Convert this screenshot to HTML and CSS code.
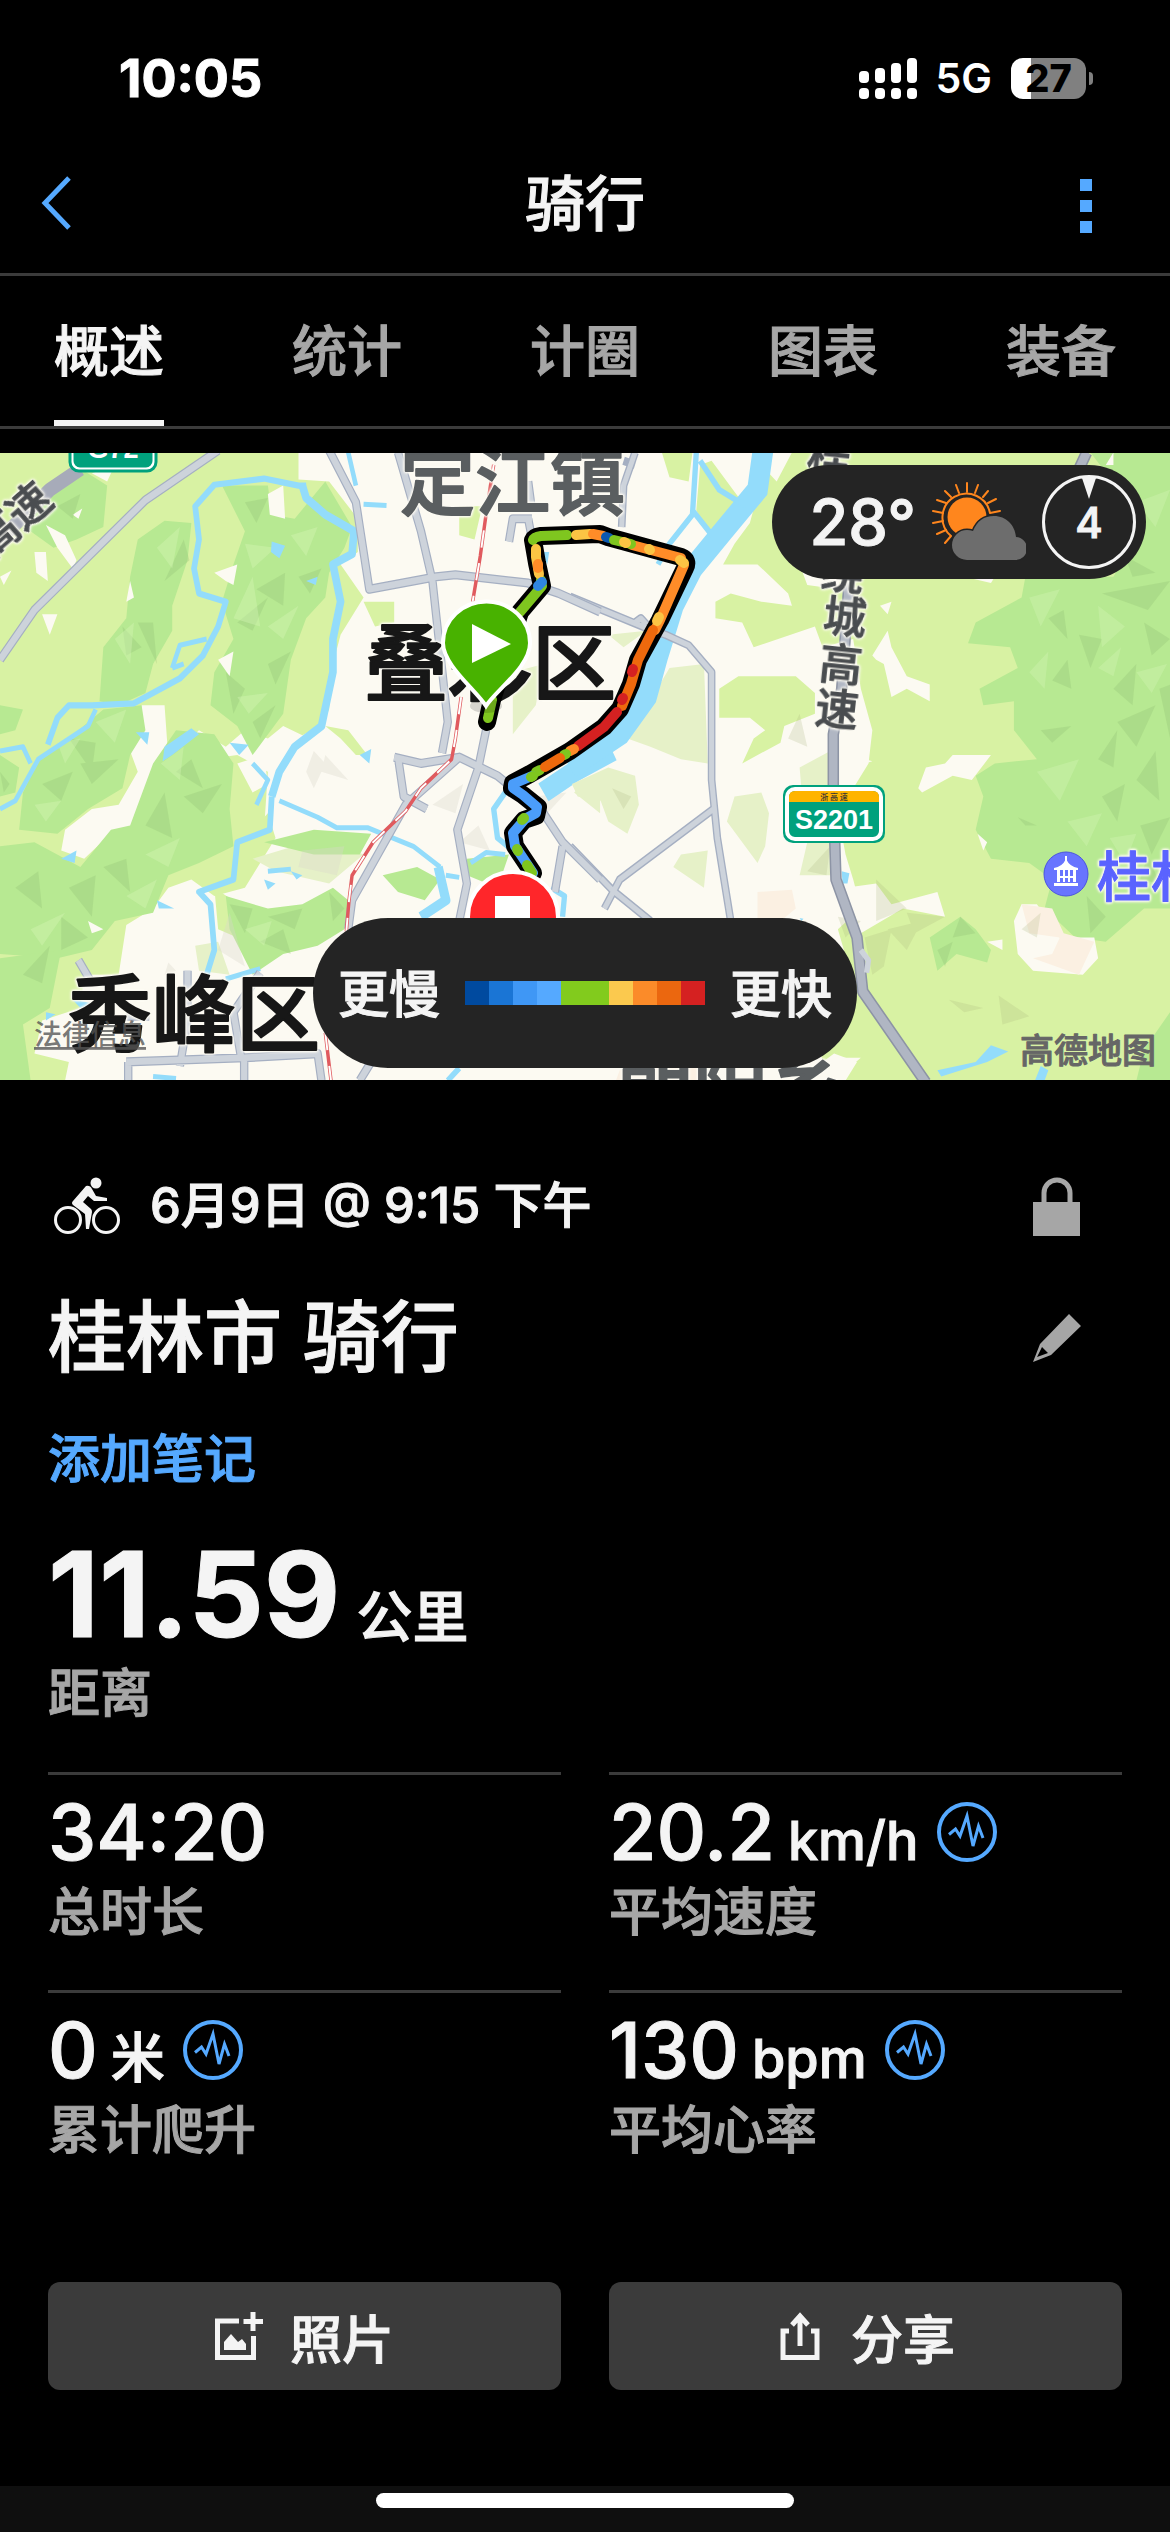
FILE: index.html
```html
<!DOCTYPE html>
<html lang="zh-CN">
<head>
<meta charset="utf-8">
<meta name="viewport" content="width=device-width">
<title>骑行</title>
<link rel="stylesheet" href="styles.css">
</head>
<body>
<svg width="0" height="0" class="defs" aria-hidden="true">
  <symbol id="pulse" viewBox="0 0 60 60">
    <circle cx="30" cy="30" r="28" fill="none" stroke="#55a9ff" stroke-width="4"/>
    <path d="M12 32.500 18.500 27 23 34 30 14 36 44 41.500 24 46 36" fill="none" stroke="#55a9ff" stroke-width="3" stroke-linejoin="miter"/>
  </symbol>
</svg>
<div class="screen">
  <div class="status">
    <span class="clock">10:05</span>
    <div class="status-right">
      <svg class="signal" viewBox="0 0 58 41" fill="#fff">
        <rect x="0" y="13" width="10" height="12" rx="4"/><rect x="16" y="10" width="10" height="15" rx="4"/><rect x="32" y="5" width="10" height="20" rx="4"/><rect x="48" y="0" width="10" height="25" rx="4"/>
        <rect x="0" y="30" width="10" height="11" rx="4"/><rect x="16" y="30" width="10" height="11" rx="4"/><rect x="32" y="30" width="10" height="11" rx="4"/><rect x="48" y="30" width="10" height="11" rx="4"/>
      </svg>
      <span class="network">5G</span>
      <div class="battery"><span class="level">27</span><span class="cap"></span></div>
    </div>
  </div>

  <header class="header">
    <button class="icon-button" aria-label="返回"><svg width="32" height="54" viewBox="0 0 32 54"><path d="M29 2 5 27 29 52" fill="none" stroke="#55a9ff" stroke-width="5"/></svg></button>
    <h1>骑行</h1>
    <button class="icon-button more" aria-label="更多"><svg width="12" height="54" viewBox="0 0 12 54"><path d="M0 0h12v12H0zM0 21h12v12H0zM0 42h12v12H0z" fill="#55a9ff"/></svg></button>
  </header>

  <nav class="tabs">
    <a href="#overview" class="active">概述</a>
    <a href="#stats">统计</a>
    <a href="#laps">计圈</a>
    <a href="#charts">图表</a>
    <a href="#gear">装备</a>
  </nav>

  <section class="map">
    <svg class="map-art" viewBox="0 453 1170 627">
      <rect y="453" width="1170" height="627" fill="#fcfaf2"/>
      <!-- west side: vegetation, relief and water -->
      <g transform="translate(0 440) scale(.3827 .4146)">
        <path fill="#d8f2a3" d="M0 30H780V95L860 100 935 190 935 270 890 300 950 380 890 470 870 540 860 650 840 690 790 712 740 690 700 720 640 700 590 740 520 700 440 770 430 640 370 640 340 750 360 800 310 880 240 890 170 940 160 990 220 1010 300 940 440 1000 560 960 640 960 700 900 720 960 640 1080 560 1100 500 1060 440 1080 400 1130 330 1170 310 1290 220 1290 210 1370 110 1400 90 1480 180 1500 170 1545H0Z"/>
        <path fill="#d8f2a3" d="M850 690 910 700 960 760 930 760 890 720ZM950 390H1030V440L980 450ZM1200 160H1260L1240 240 1200 230ZM560 1080 640 1130 620 1200 570 1180ZM540 770 620 760 700 800 690 940 600 1000 520 980Z"/>
        <path fill="#e6f1c8" d="M1340 560 1420 540 1400 640 1340 710ZM510 1220 570 1210 600 1290 520 1280ZM660 1010 840 960 950 1000 860 1070 720 1040ZM1500 850 1568 800V900Z"/>
        <g fill="#b7e992">
          <path d="M140 100 220 75 280 110 270 210 200 240 140 260 110 240 50 200 90 150ZM360 240 430 195 500 200 490 290 450 400 450 460 400 540 380 610 310 640 260 630 270 500 330 430 340 330Z"/>
          <path d="M580 110 700 110 710 180 770 190 850 100 920 210 900 260 860 320 850 380 800 430 760 530 740 660 660 760 620 690 550 640 560 560 610 480 580 390 610 300 640 220Z"/>
          <path d="M100 770 180 720 270 650 370 640 380 700 340 760 320 840 230 890 150 950 50 940 60 850Z"/>
          <path d="M400 780 460 700 560 710 610 780 600 890 610 980 520 1020 440 1050 400 1140 300 1160 240 1230 150 1250 0 1240V980L90 970 210 1030 290 940 340 930Z"/>
          <path d="M0 1250 160 1230 130 1370 60 1410 80 1545H0ZM590 1100 700 1130 790 1120 870 1080 910 1110 900 1180 830 1220 740 1240 660 1290 600 1180ZM690 970 820 940 970 950 940 1000 820 1000ZM1000 1050 1090 1030 1150 1060 1110 1110 1040 1090ZM0 640 60 650 40 700 0 710ZM0 760 50 790 40 850 0 860ZM1220 1010 1330 1000 1300 1080 1220 1050Z"/>
        </g>
        <g fill="#fcfaf2">
          <path d="M120 205 170 230 200 290 190 310 150 260ZM90 270 120 270 125 340 95 320ZM110 420 150 420 130 470ZM340 340 350 380 330 390ZM700 130 740 110 745 190 705 180ZM560 320 620 300 610 350 590 340ZM570 530 610 510 600 570ZM240 80 300 60 280 100ZM190 180 215 165 205 190ZM0 330 30 315 10 350ZM620 780 690 760 700 830 660 850ZM230 1160 270 1180 240 1190Z"/>
        </g>
        <g fill="#91bf73" opacity=".3">
          <path d="M360 440 410 540 400 440ZM670 360 745 320 740 400ZM480 240 495 290 430 340ZM320 450 370 500 330 520ZM620 440 700 380 660 460ZM700 540 760 510 720 590ZM590 560 640 600 610 660ZM660 680 720 640 680 720ZM180 720 250 730 240 800ZM210 780 310 770 240 830ZM110 830 190 800 160 870ZM330 1010 340 1090 270 1030ZM500 770 530 840 460 800ZM380 930 430 850 450 960ZM40 1080 100 1040 110 1130ZM180 1080 250 1050 240 1150ZM60 1290 130 1220 110 1310ZM600 1120 660 1130 640 1190ZM680 1210 740 1180 760 1240ZM700 1150 790 1130 770 1180ZM860 1090 900 1130 870 1160ZM160 1150 230 1200 160 1230ZM0 800 25 830 10 850ZM150 160 210 130 190 190ZM640 150 700 140 670 200ZM780 330 840 310 810 370ZM480 860 580 830 530 900Z"/>
        </g>
        <g fill="#d5f5b4" opacity=".4">
          <path d="M410 260 470 210 450 310ZM610 430 660 330 680 450ZM640 250 720 260 660 310ZM700 450 780 400 740 480ZM150 730 210 720 170 780ZM250 680 330 650 300 730ZM90 880 160 870 120 920ZM420 780 480 740 470 820ZM330 1100 410 1060 380 1130ZM80 1180 170 1140 110 1220ZM640 1180 710 1160 690 1220ZM300 480 350 440 340 540ZM620 620 700 610 650 660ZM380 1000 470 960 440 1030ZM760 230 830 210 800 280Z"/>
        </g>
        <g fill="#d9d6cb" opacity=".35"><path d="M820 750 850 780 820 840 800 800ZM850 760 910 820 840 800ZM1130 880 1210 830 1190 900ZM1200 970 1250 930 1280 990ZM440 1260 460 1280 430 1290ZM790 990 900 980 880 1050 780 1030ZM1400 860 1480 850 1430 900ZM600 1140 570 1230 640 1270Z"/></g>
        <g fill="none" stroke="#93dcfb" stroke-width="12" stroke-linejoin="round">
          <path d="M480 540 450 550M540 480 470 495 450 550M250 650 230 690 100 770 40 870 0 890M0 750 60 740 80 780" />
          <path stroke-width="15" d="M800 110 780 110 690 93 560 108 510 160 520 240 507 310 520 370 590 390 570 450 530 520 470 575 350 635 240 640 180 640 150 670 125 735"/>
          <path stroke-width="20" d="M790 110 800 140 850 180 925 220 920 275 870 300 890 390 870 480 870 560 840 690 770 740 730 800 710 860"/>
          <path stroke-width="15" d="M710 860 705 940 620 970 610 1060 520 1090 550 1120 560 1230 540 1290"/>
          <path d="M910 30 930 110M660 780 700 820 670 880M730 870 830 910 880 935 960 935 1080 980 1150 1030"/>
          <path stroke-width="24" d="M1145 1030 1165 1110 1100 1150"/>
          <path d="M1165 1050 1200 1055M1230 1020 1270 995 1320 1000M950 155 1010 158M700 1040 760 1035M590 1300 680 1275M400 1535 460 1540"/>
          <path stroke-width="14" d="M1320 850 1290 890 1300 960 1340 990M1440 1080 1475 1100 1470 1150M1170 1545 1200 1515"/>
        </g>
        <path fill="#93dcfb" d="M710 245 745 255 730 285 708 270ZM430 740 500 695 520 710 450 760 425 775ZM355 705 390 705 385 735ZM160 1010 200 990 195 1020ZM940 760 970 745 965 780ZM690 1060 720 1070 700 1085ZM760 1040 790 1050 775 1060ZM410 1110 455 1130 415 1130ZM600 730 650 735 625 760ZM800 340 830 330 825 350ZM120 1380 145 1385 120 1400ZM1415 270 1435 270 1430 300ZM190 1350 250 1360 210 1370Z"/>
        <path fill="none" stroke="#93dcfb" stroke-width="50" d="M1600 750 1500 800 1420 850"/>
      </g>
      <!-- east side -->
      <g transform="translate(570 440) scale(.3827 .4146)">
        <path fill="#d8f2a3" d="M240 30H320L310 100 260 90ZM340 60 370 50 450 150 370 240 330 170ZM520 30H1568V1545H720L750 1500 690 1480 660 1500 640 1400 750 1340 700 1180 760 1130 740 1060 720 1000 700 900 780 780 790 700 760 600 740 480 660 500 640 450 480 500 450 440 380 430 380 390 420 370 500 390 580 400 570 370 490 300 400 300 430 250 470 200ZM390 600 440 570 590 570 640 610 640 660 560 690 550 730 450 780 480 720 510 700 470 670 390 670Z"/>
        <path fill="#b7e992" d="M1360 30H1568V1130L1500 1130 1400 1210 1320 1200 1240 1130 1260 1060 1200 1020 1100 1010 1060 940 1080 860 1060 810 1110 780 1220 770 1160 700 1160 630 1080 640 1070 600 1170 550 1150 500 1040 490 1060 440 1180 380 1190 330H1420L1500 200ZM940 1200 1020 1150 1060 1180 1100 1230 1090 1260 1010 1240 960 1280ZM1500 1470 1568 1380V1545H1480Z"/>
        <path fill="#fcfaf2" d="M640 160 720 290 700 360 620 350 600 300ZM530 30 580 30 540 100 520 80ZM790 520 830 460 840 500 880 570 940 590 940 630 880 600 840 620 820 540 800 530ZM1030 330H1110L1100 345ZM700 750 790 775 700 800ZM910 840 930 790 980 780 1000 760 1100 760 1050 820 1000 810 920 850ZM1065 950 1090 970 1080 990ZM720 1080 800 1070 840 1120 960 1090 980 1150 870 1130 760 1190ZM1090 1210 1130 1205 1130 1230ZM1160 1160 1180 1120 1220 1120 1280 1200 1370 1200 1380 1250 1340 1290 1210 1280 1170 1240ZM1400 60 1420 30 1420 60ZM680 1490 760 1490 710 1530ZM810 400 840 390 830 420Z"/>
        <path fill="#e6f1c8" d="M260 550 350 540 360 780 290 770 210 740 150 720ZM5 830 100 790 170 810 180 880 150 950 100 920 80 870 20 860ZM430 860 500 850 520 900 510 980 490 1020 410 920ZM290 1000 360 990 350 1080 270 1030ZM600 790 680 750 690 920 610 900ZM100 470 200 460 140 500ZM620 970 690 970 680 1050 600 1050Z"/>
        <path fill="#fbf0e2" d="M490 1090 580 1085 590 1130 560 1153H490ZM1180 1120 1260 1130 1290 1190 1370 1210 1330 1290 1210 1250 1260 1240 1280 1200 1200 1190ZM130 1520 350 1510 340 1545H120Z"/>
        <g fill="#91bf73" opacity=".3">
          <path d="M1390 370 1568 340 1510 410ZM1330 470 1390 480 1360 550ZM1250 430 1290 410 1300 480ZM1420 600 1480 540 1470 640ZM1430 680 1530 640 1480 740ZM1480 820 1530 750 1540 870ZM1230 700 1310 690 1260 730ZM1170 910 1220 930 1190 930ZM1500 440 1568 480 1520 520ZM1450 280 1530 320 1470 330ZM1390 860 1450 830 1430 920ZM1260 580 1300 530 1310 600ZM1540 600 1568 590V720ZM1490 930 1568 910 1520 1000ZM1020 1150 1060 1190 1000 1200ZM960 1230 1000 1210 980 1270ZM1510 1000 1540 1070 1490 1060ZM1350 1100 1400 1150 1360 1190ZM1380 770 1430 700 1420 790Z"/>
        </g>
        <g fill="#d5f5b4" opacity=".35"><path d="M1200 380 1280 360 1230 450ZM1380 400 1450 450 1390 500ZM1480 150 1568 120 1530 210ZM1220 800 1330 770 1280 870ZM1300 920 1390 900 1350 980ZM1480 560 1560 540 1520 610ZM1200 560 1250 510 1240 600ZM1410 960 1480 950 1450 1020ZM1380 550 1440 500 1420 570Z"/></g>
        <g fill="#a9b37d" opacity=".22"><path d="M620 1040 680 980 670 1050ZM800 1060 880 1130 800 1160ZM880 1140 980 1150 900 1190ZM700 1150 760 1160 720 1200ZM770 1200 840 1180 820 1270 790 1290ZM990 1350 1080 1370 1030 1380ZM1120 1340 1200 1390 1130 1410ZM570 720 600 660 620 740ZM110 840 160 860 140 890ZM1180 1180 1230 1140 1220 1200ZM830 1180 920 1160 880 1230Z"/></g>
        <path fill="none" stroke="#93dcfb" stroke-width="54" d="M505 20 490 120 400 220 320 310 270 400 230 520 200 620 130 710 0 790"/>
        <path fill="none" stroke="#93dcfb" stroke-width="14" d="M330 30 320 180 260 250 230 300M340 50 390 120 460 160M320 170 380 240"/>
        <path fill="#93dcfb" d="M710 1040 730 1045 725 1070 712 1070ZM960 1520 1060 1500 1100 1460 1145 1475 1090 1500 970 1535ZM1215 1545 1230 1510 1250 1520 1240 1545ZM600 1153 610 1155 605 1160Z"/>
        <g fill="none" stroke-linejoin="round">
          <g stroke="#a5afc2" stroke-width="20"><path d="M0 378 190 450 250 470 310 495 370 560V820L385 960 420 1160M375 890 130 1060 90 1130M0 980 110 1085 210 1160M170 30 140 110 135 210M140 50 170 60M170 440 185 430 200 445"/></g>
          <g stroke="#cdd3db" stroke-width="13"><path d="M0 378 190 450 250 470 310 495 370 560V820L385 960 420 1160M375 890 130 1060 90 1130M0 980 110 1085 210 1160M170 30 140 110 135 210M170 440 185 430 200 445"/></g>
          <path stroke="#8d94a5" stroke-width="30" d="M730 330 710 600 688 710V860L695 1060 750 1200 765 1330 930 1550M1350 30 1320 90"/>
          <path stroke="#b0b6c3" stroke-width="22" d="M730 330 710 600 688 710V860L695 1060 750 1200 765 1330 930 1550M1350 30 1320 90"/>
          <path stroke="#cdd3db" stroke-width="14" d="M760 1230 780 1255 775 1285"/>
        </g>
      </g>
      <!-- western road network and railway -->
      <g transform="translate(0 440) scale(.3827 .4146)" fill="none" stroke-linejoin="round">
        <g stroke="#a5afc2" stroke-width="22"><path d="M0 530 90 410 380 145 570 25M860 25 930 150 965 360 1140 330 1190 325 1380 345 1460 370 1568 415M1040 30 1100 220 1130 340 1170 680 1155 755M1030 765 1100 780 1200 765 1300 810 1420 900 1470 970 1568 1060M1040 765 1055 860 1115 890M1270 700 1250 790 1195 940 1220 1070 1200 1160M1470 980 1450 1090M205 1255 240 1310M330 1500 640 1490 830 1480 840 1545M335 1500V1545M638 1490V1545M470 1510 490 1400 490 1280M630 1490 610 1380 680 1285M1390 190H1340L1330 245M1380 190 1395 260M940 1545 970 1500M910 1180 920 1110 1060 880 1200 765M390 1390H330M1380 100 1390 170"/></g>
        <g stroke="#cdd3db" stroke-width="16"><path d="M0 530 90 410 380 145 570 25M860 25 930 150 965 360 1140 330 1190 325 1380 345 1460 370 1568 415M1040 30 1100 220 1130 340 1170 680 1155 755M1030 765 1100 780 1200 765 1300 810 1420 900 1470 970 1568 1060M1040 765 1055 860 1115 890M1270 700 1250 790 1195 940 1220 1070 1200 1160M1470 980 1450 1090M205 1255 240 1310M330 1500 640 1490 830 1480 840 1545M335 1500V1545M638 1490V1545M470 1510 490 1400 490 1280M630 1490 610 1380 680 1285M1390 190H1340L1330 245M1380 190 1395 260M940 1545 970 1500M910 1180 920 1110 1060 880 1200 765M390 1390H330M1380 100 1390 170"/></g>
        <path stroke="#a7abb9" stroke-width="34" d="M0 240 130 120 210 70"/>
        <path stroke="#e05a5e" stroke-width="9" d="M1290 60 1270 180 1255 280 1235 390M1205 620 1190 720 1180 770 1100 840 1060 895 975 970 920 1050 912 1110 905 1185M850 1430 865 1545"/>
        <path stroke="#fff" stroke-width="5" stroke-dasharray="42 38" d="M1290 60 1270 180 1255 280 1235 390M1205 620 1190 720 1180 770 1100 840 1060 895 975 970 920 1050 912 1110 905 1185M850 1430 865 1545"/>
      </g>
      <!-- highway shields -->
      <rect x="72" y="430" width="82" height="39" rx="8" fill="#00a17d" stroke="#fff" stroke-width="3"/><rect x="70" y="430" width="86" height="41" rx="9" fill="none" stroke="#00a17d" stroke-width="3"/>
      <text class="shield" x="113" y="458">G72</text>
      <rect x="783" y="785" width="102" height="58" rx="10" fill="#00a17d"/><rect x="787" y="789" width="94" height="50" rx="8" fill="#00a17d" stroke="#fff" stroke-width="4"/><path d="M789 802v-5q0-6 6-6h78q6 0 6 6v5z" fill="#ffb400"/>
      <text class="shield-top" x="834" y="800">浙 高 速</text>
      <text class="shield" x="834" y="829">S2201</text>
      <!-- place names -->
      <g class="town"><text x="400" y="509">定江镇</text><text x="618" y="1113">朝阳乡</text></g>
      <g class="district"><text x="364" y="694">叠彩区</text><text x="68" y="1045">秀峰区</text></g>
      <g class="road"><text transform="translate(9 544) rotate(-41)" x="-24" y="0">高速</text>
        <text transform="translate(829 458) rotate(6)" y="16">桂</text><text transform="translate(843 573) rotate(6)" y="16">绕</text><text transform="translate(845 617) rotate(6)" y="16">城</text><text transform="translate(841 664) rotate(6)" y="16">高</text><text transform="translate(837 709) rotate(6)" y="16">速</text></g>
      <circle cx="1066" cy="874" r="22" fill="#6874ff" stroke="#4a53e0"/><path d="M1054 868q8-1 12-9 4 8 12 9v2h-24zM1057 870h3v12h-3zM1063 870h2v12h-2zM1068 870h2v12h-2zM1073 870h3v12h-3zM1057 876h19v2h-19zM1054 883h24v3h-24zM1065 856h2v5h-2z" fill="#fff"/>
      <text class="poi" x="1097" y="897">桂林</text>
      <!-- ridden track, coloured by speed -->
      <g fill="none" stroke-linecap="round" stroke-linejoin="round">
        <path stroke="#000" stroke-width="18" d="M487 722 492 700 520 612 542 586 537 563 533 540Q534 537 541 536L600 534 608 537 681 557Q689 560 685 568L660 620 638 660 631 684 620 709 604 727 570 751 530 774 513 783 512 788 523 795 538 807 536 816 524 820 513 833 515 846 533 873"/>
        <g stroke-width="10" stroke="#7fc61f">
          <path d="M488 718 492 700M520 612 542 586 541 580M533 540Q534 537 541 536L567 535"/>
          <path stroke="#fbc444" d="M539 574 536 557 536 549M576 535 590 534"/><path stroke="#ff8c28" d="M538 564V568M593 534 603 536M632 545 681 558M684 565 660 620 655 630"/>
          <path stroke="#2f86e0" d="M538 586 542 582"/>
          <path stroke="#0c58b0" d="M606 537 609 538"/><path d="M614 540 631 544"/>
          <path stroke="#fbc444" d="M624 542 626 543M649 549 650 550M680 560 684 563M657 621 659 617"/>
          <path stroke="#ee690d" d="M653 630 638 660 631 684 622 706"/>
          <path stroke="#d42121" d="M633 669 632 672M623 698 622 700M617 712 604 727 578 746"/>
          <path stroke="#ff8c28" d="M574 749 570 751"/><path d="M566 754 564 755M540 770 536 772"/><path stroke="#ee690d" d="M560 758 545 767"/>
          <path stroke="#4b9dfa" d="M532 776 513 784 513 788 523 795 537 807 536 813 525 819 513 833 515 846 533 873"/>
          <path d="M531 777 533 776M524 818 522 820M517 849 518 851M527 865 532 873"/>
        </g>
      </g>
      <ellipse cx="486" cy="706" rx="16" ry="7" opacity=".15"/>
      <path d="M486 706C476 690 443 665 443 643A43 41 0 0 1 530 643C530 667 496 690 486 706Z" fill="#48b200" stroke="#fff" stroke-width="4"/><path d="M472 624v39l39-19z" fill="#fff"/>
      <circle cx="513" cy="917" r="45" fill="#ff262a" stroke="#fff" stroke-width="4"/><path d="M495 896h35v35h-35z" fill="#fff"/>
      <text class="credit" x="1020" y="1063">高德地图</text>
      <a href="#legal"><text class="legal" x="34" y="1045">法律信息</text></a>
    </svg>

    <div class="weather">
      <span>28°</span>
      <svg width="94" height="80" viewBox="0 0 94 80">
        <g fill="none" stroke="#ff861d" stroke-width="2"><path d="M19 54A24 24 0 1 1 58 31"/><path stroke-linecap="round" d="M35 10V1M43 11 46 3M51 15 56 9M56 21 64 17M58 31 68 29M27 11 24 3M19 15 13 9M14 21 5 18M11 31 1 29M11 39 1 41M14 48 5 52M19 54 13 61"/></g>
        <circle cx="35" cy="35" r="19.500" fill="#ff861d"/>
        <path d="M35 78a15 15 0 0 1 0-30q3 0 6 1C45 39 52 34 62 34c12 0 21 9 22 21a11.500 11.500 0 0 1-1 23z" fill="#6d6d6d" stroke="#242424" stroke-width="3" paint-order="stroke"/>
      </svg>
      <div class="wind"><svg viewBox="0 0 94 94"><circle cx="47" cy="47" r="45.500" fill="none" stroke="#f4f4f4" stroke-width="3"/><path d="M40 3h14l-7 21z" fill="#f4f4f4"/></svg><span>4</span></div>
    </div>
    <div class="legend">
      <span>更慢</span>
      <div class="scale"><i class="c1"></i><i class="c2"></i><i class="c3"></i><i class="c4"></i><i class="c5"></i><i class="c5"></i><i class="c6"></i><i class="c7"></i><i class="c8"></i><i class="c9"></i></div>
      <span>更快</span>
    </div>
  </section>

  <main class="content">
    <div class="row meta">
      <svg width="66" height="58" viewBox="0 0 66 58"><g fill="none" stroke="#f4f4f4" stroke-width="3"><circle cx="14" cy="43" r="12.500"/><circle cx="52" cy="43" r="12.500"/></g><circle cx="42" cy="6" r="5.500" fill="#f4f4f4"/><path d="M32 9q4-1 6 3l4 7 11 2v3H40l-6-5-5 6 8 7q1 1 1 3l-3 17h-3l-1-15-12-9q-2-2 0-4z" fill="#f4f4f4"/></svg>
      <span class="date">6月9日 @ 9:15 下午</span>
      <button class="icon-button end" aria-label="隐私"><svg width="48" height="62" viewBox="0 0 48 62"><path d="M11 30V18a13 13 0 0 1 26 0V30" fill="none" stroke="#a6a6a6" stroke-width="5"/><path d="M0 27h47v34H0z" fill="#a6a6a6"/></svg></button>
    </div>
    <div class="row title-row">
      <h2>桂林市 骑行</h2>
      <button class="icon-button end" aria-label="编辑"><svg width="48" height="48" viewBox="0 0 48 48"><path fill="#a6a6a6" fill-rule="evenodd" d="M36 0 48 12 18 41 0 48 7 30ZM9 33 4 43 15 39Z"/></svg></button>
    </div>
    <a class="note" href="#note">添加笔记</a>
    <div class="distance"><b>11.59</b><span class="unit">公里</span></div>
    <div class="label">距离</div>

    <div class="grid">
      <div class="stat"><div class="value"><b>34:20</b></div><div class="label">总时长</div></div>
      <div class="stat"><div class="value"><b>20.2</b><span class="unit">km/h</span><svg class="pulse"><use href="#pulse"/></svg></div><div class="label">平均速度</div></div>
      <div class="stat"><div class="value"><b>0</b><span class="unit">米</span><svg class="pulse"><use href="#pulse"/></svg></div><div class="label">累计爬升</div></div>
      <div class="stat"><div class="value"><b>130</b><span class="unit">bpm</span><svg class="pulse"><use href="#pulse"/></svg></div><div class="label">平均心率</div></div>
    </div>
    <div class="actions">
      <button><svg width="48" height="48" viewBox="0 0 48 48"><path d="M24 9H2.500V45.500H38.500V24" fill="none" stroke="#f4f4f4" stroke-width="5"/><path d="M38 0v19M28.500 9.500H48" stroke="#f4f4f4" stroke-width="5"/><path d="M9 38V30l7-8 7 8 4-3 4 5v6z" fill="#f4f4f4"/></svg>照片</button>
      <button><svg width="48" height="48" viewBox="0 0 48 48"><path d="M13 19H7v26.500h34V19h-6M24 34V6M16 13l8-9 8 9" fill="none" stroke="#f4f4f4" stroke-width="5"/></svg>分享</button>
    </div>
  </main>
  <footer class="home"><span></span></footer>
</div>
</body>
</html>
```

FILE: styles.css
```css
* { box-sizing: border-box; }
body { margin: 0; background: #000; color: #f4f4f4; font-family: Inter, "Noto Sans CJK SC", sans-serif; font-weight: 500; -webkit-text-stroke: 1px currentColor; }
h1, h2 { margin: 0; font-weight: 500; }
a { text-decoration: none; color: inherit; }
svg { display: block; flex: none; }
button { font: inherit; color: inherit; border: 0; padding: 0; }
.defs { position: absolute; }
.screen { display: flex; flex-direction: column; min-height: 100vh; }

.status { display: flex; justify-content: space-between; align-items: center; height: 156px; padding: 0 78px 0 119px; color: #fff; }
.clock { font-size: 52px; font-weight: 700; }
.status-right { display: flex; align-items: center; }
.signal { width: 58px; height: 41px; }
.network { font-size: 41px; font-weight: 600; margin: 0 19px; -webkit-text-stroke: 0; }
.battery { position: relative; width: 75px; height: 41px; border-radius: 12px; background: linear-gradient(90deg, #fff 20px, #808080 20px); text-align: center; margin-right: 6px; }
.level { display: block; font-size: 38px; line-height: 41px; font-weight: 800; color: #000; -webkit-text-stroke: 0; }
.cap { position: absolute; right: -7px; top: 14px; width: 4px; height: 13px; border-radius: 0 4px 4px 0; background: #808080; }

.header { display: flex; justify-content: space-between; align-items: center; height: 120px; padding: 0 78px 24px 40px; border-bottom: 3px solid #3b3b3b; }
.header h1 { font-size: 60px; line-height: 72px; padding: 2px 0 0 18px; }
.icon-button { background: none; display: flex; }
.more { padding-top: 7px; }

.tabs { display: flex; justify-content: space-between; height: 153px; padding: 0 54px; border-bottom: 3px solid #3b3b3b; color: #a6a6a6; font-size: 55px; }
.tabs a { line-height: 150px; height: 150px; }
.tabs .active { color: #f4f4f4; border-bottom: 6px solid #f4f4f4; }

.map { position: relative; margin-top: 24px; overflow: hidden; }
.map-art { width: 100%; height: auto; }
.map text { font-family: "Noto Sans CJK SC", sans-serif; -webkit-text-stroke: 0; stroke-linejoin: round; }
.map .town text, .map .district text, .map .road text, .map .poi { filter: drop-shadow(0 0 1px #fcfaf2) drop-shadow(0 0 1px #fcfaf2) drop-shadow(0 0 1px #fcfaf2); }
.map .town text { font-size: 75px; fill: #5a5e60; stroke: #5a5e60; stroke-width: 2px; }
.map .district text { font-size: 84px; fill: #171717; stroke: #171717; stroke-width: 2px; }
.map .road text { font-size: 43px; fill: #4a4d50; stroke: #4a4d50; stroke-width: 1px; text-anchor: middle; }
.map .road text:first-child { text-anchor: start; }
.map .shield { font-family: "Liberation Sans", sans-serif; font-size: 27px; font-weight: 700; fill: #fff; text-anchor: middle; }
.map .shield-top { font-size: 8px; fill: #333; text-anchor: middle; }
.map .poi { font-size: 54px; fill: #5a63ff; stroke: #5a63ff; stroke-width: 1px; }
.map .credit { font-size: 34px; fill: #666; stroke: #666; stroke-width: 1px; }
.map .legal { font-size: 28px; fill: #555; fill-opacity: .8; text-decoration: underline; }

.weather { position: absolute; top: 12px; right: 24px; height: 114px; border-radius: 57px; background: #242424; display: flex; align-items: center; gap: 16px; padding: 0 10px 0 38px; font-size: 63px; }
.wind { position: relative; width: 94px; height: 94px; display: grid; place-items: center; font-size: 42px; }
.wind svg { position: absolute; inset: 0; }
.legend { position: absolute; left: 50%; bottom: 12px; transform: translateX(-50%); width: 544px; height: 150px; border-radius: 75px; background: #242424; display: flex; align-items: center; justify-content: center; gap: 25px; font-size: 51px; }
.legend span { padding-bottom: 4px; }
.scale { display: flex; }
.scale i { width: 24px; height: 24px; }
.c1 { background: #004a9f; } .c2 { background: #1a75d5; } .c3 { background: #3f97f5; } .c4 { background: #55a9ff; } .c5 { background: #82cb1d; } .c6 { background: #fbc94e; } .c7 { background: #fb8b29; } .c8 { background: #eb670f; } .c9 { background: #d52121; }

.content { padding: 90px 48px 96px; }
.row { display: flex; align-items: center; }
.end { margin-left: auto; margin-right: 41px; }
.meta { height: 72px; padding-left: 6px; font-size: 49px; line-height: 72px; }
.date { margin-left: 30px; }
.title-row { height: 120px; margin-top: 36px; }
h2 { font-size: 78px; line-height: 120px; }
.note { display: block; color: #55a9ff; font-size: 52px; line-height: 72px; margin-top: 26px; }
.distance { display: flex; align-items: baseline; gap: 16px; height: 128px; line-height: 128px; margin-top: 34px; }
.distance b { font-size: 118px; font-weight: 700; }
.unit { font-size: 56px; }
.label { font-size: 52px; line-height: 72px; color: #a6a6a6; }
.grid { display: grid; grid-template-columns: 1fr 1fr; column-gap: 48px; margin-top: 42px; }
.stat { height: 218px; border-top: 3px solid #3b3b3b; padding-top: 12px; }
.value { display: flex; align-items: baseline; height: 90px; line-height: 90px; gap: 13px; }
.value b { font-size: 77px; font-weight: 500; }
.value .unit { font-size: 54px; }
.pulse { width: 60px; height: 60px; align-self: center; margin-left: 5px; }
.actions { display: grid; grid-template-columns: 1fr 1fr; gap: 48px; margin-top: 74px; }
.actions button { height: 108px; border-radius: 12px; background: #3b3b3b; font-size: 52px; display: flex; align-items: center; justify-content: center; gap: 27px; }
.home { margin-top: auto; height: 46px; background: #0f0f0f; padding-top: 7px; display: flex; justify-content: center; }
.home span { width: 418px; height: 15px; border-radius: 8px; background: #fff; }
```
